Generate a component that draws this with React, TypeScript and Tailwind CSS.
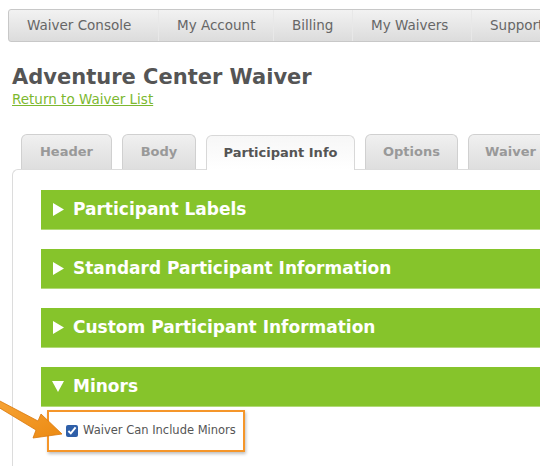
import React from 'react';

const navItems = [
  { label: 'Waiver Console', w: 'w-[149px]' },
  { label: 'My Account', w: 'w-[115px]' },
  { label: 'Billing', w: 'w-[79px]' },
  { label: 'My Waivers', w: 'w-[119px]' },
  { label: 'Support', w: 'w-[110px]' },
];

const tabs = [
  { label: 'Header', active: false, w: 'w-[91px]' },
  { label: 'Body', active: false, w: 'w-[74px]' },
  { label: 'Participant Info', active: true, w: 'w-[149px]' },
  { label: 'Options', active: false, w: 'w-[93px]' },
  { label: 'Waiver Text', active: false, w: 'w-[120px]' },
];

const sections = [
  { label: 'Participant Labels', open: false },
  { label: 'Standard Participant Information', open: false },
  { label: 'Custom Participant Information', open: false },
  { label: 'Minors', open: true },
];

function SectionBar({ label, open }: { label: string; open: boolean }) {
  return (
    <div className="h-[40px] bg-[#86c42b] border-b border-[#b2da78] flex items-center pl-[11px] text-white font-bold text-[17px] whitespace-nowrap">
      <svg className="mr-[9px] shrink-0" width="12" height="13" viewBox="0 0 12 13">
        {open ? <path d="M0 1 L12 1 L6 12 Z" fill="white" /> : <path d="M1 0 L12 6.5 L1 13 Z" fill="white" />}
      </svg>
      {label}
    </div>
  );
}

export default function App() {
  return (
    <div className="w-[540px] h-[466px] overflow-hidden bg-white font-['DejaVu_Sans',Verdana,sans-serif] relative">
      <div className="pt-[9px] pl-[8px]">
        <div className="h-[33px] w-[600px] flex items-center rounded-[3px] border border-[#c8c8c8] bg-gradient-to-b from-[#f2f2f2] to-[#dcdcdc] text-[13.5px] text-[#666]">
          {navItems.map((item, i) => (
            <div
              key={item.label}
              className={`${item.w} shrink-0 h-full flex items-center pl-[18px] whitespace-nowrap ${i > 0 ? 'border-l border-[#e8e8e8]' : ''}`}
            >
              {item.label}
            </div>
          ))}
        </div>
      </div>

      <div className="pl-[12px] pt-[22px]">
        <h1 className="text-[21px] leading-[26px] font-bold text-[#555] whitespace-nowrap">Adventure Center Waiver</h1>
        <a className="block mt-[1px] text-[13.5px] leading-[16px] text-[#7cb82f] underline">Return to Waiver List</a>
      </div>

      <div className="pl-[21px] pt-[27px] flex gap-[10px] items-end">
        {tabs.map((t) => (
          <div
            key={t.label}
            className={`${t.w} shrink-0 h-[35px] rounded-t-[6px] border border-b-0 flex items-center justify-center text-[13px] font-bold whitespace-nowrap overflow-hidden ${
              t.active
                ? 'bg-gradient-to-b from-[#f7f7f7] to-white border-[#d8d8d8] text-[#555] relative top-[1px] z-10'
                : 'bg-gradient-to-b from-[#f0f0f0] to-[#dedede] border-[#d0d0d0] text-[#999]'
            }`}
          >
            {t.label}
          </div>
        ))}
      </div>

      <div className="ml-[12px] border-t border-l border-[#dcdcdc] rounded-tl-[6px] pl-[28px] pt-[20px] h-[300px]">
        <div className="flex flex-col gap-[19px]">
          {sections.map((s) => (
            <SectionBar key={s.label} label={s.label} open={s.open} />
          ))}
        </div>
        <div className="mt-[3px] ml-[6px] w-[198px] h-[42px] border-2 border-[#f5962a] shadow-[1px_2px_3px_rgba(0,0,0,0.25)] flex items-center pl-[17px] text-[11.5px] text-[#555] whitespace-nowrap">
          <input type="checkbox" defaultChecked className="w-[12px] h-[12px] mr-[5px] accent-[#2f5fa8]" />
          Waiver Can Include Minors
        </div>
      </div>

      <svg className="absolute left-0 top-[394px]" width="70" height="50" viewBox="0 0 70 50">
        <defs>
          <linearGradient id="ag" x1="0" y1="0" x2="1" y2="1">
            <stop offset="0" stopColor="#f6a335" />
            <stop offset="1" stopColor="#ec8a12" />
          </linearGradient>
        </defs>
        <path
          d="M-2 6 L38 27 L41 20 L62 40 L33 44 L36 36 L-2 13 Z"
          fill="url(#ag)"
          stroke="#d9780c"
          strokeWidth="0.8"
          strokeLinejoin="round"
        />
      </svg>
    </div>
  );
}
